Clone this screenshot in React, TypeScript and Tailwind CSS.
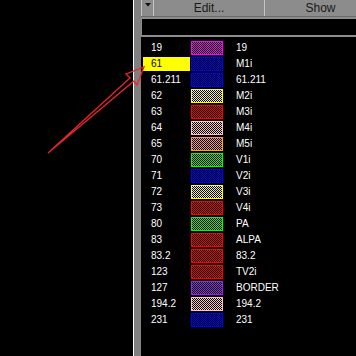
import React from 'react';

type Row = { value: string; color: string; label: string; selected?: boolean };

// full class strings per swatch colour: 1px border + 1px checker of colour/black
const SWATCH: Record<string, string> = {
  magenta: 'border-[#ff00ff] bg-[image:repeating-conic-gradient(#ff00ff_0_25%,#000_0_50%)]',
  blue: 'border-[#0000ff] bg-[image:repeating-conic-gradient(#0000ff_0_25%,#000_0_50%)]',
  yellow: 'border-[#ffff00] bg-[image:repeating-conic-gradient(#ffff00_0_25%,#000_0_50%)]',
  red: 'border-[#ff0000] bg-[image:repeating-conic-gradient(#ff0000_0_25%,#000_0_50%)]',
  pink: 'border-[#ffc0cb] bg-[image:repeating-conic-gradient(#ffc0cb_0_25%,#000_0_50%)]',
  orange: 'border-[#ffa500] bg-[image:repeating-conic-gradient(#ffa500_0_25%,#000_0_50%)]',
  green: 'border-[#00ff00] bg-[image:repeating-conic-gradient(#00ff00_0_25%,#000_0_50%)]',
  purple: 'border-[#a020f0] bg-[image:repeating-conic-gradient(#a020f0_0_25%,#000_0_50%)]',
};

const ROWS: Row[] = [
  { value: '19', color: 'magenta', label: '19' },
  { value: '61', color: 'blue', label: 'M1i', selected: true },
  { value: '61.211', color: 'blue', label: '61.211' },
  { value: '62', color: 'yellow', label: 'M2i' },
  { value: '63', color: 'red', label: 'M3i' },
  { value: '64', color: 'pink', label: 'M4i' },
  { value: '65', color: 'orange', label: 'M5i' },
  { value: '70', color: 'green', label: 'V1i' },
  { value: '71', color: 'blue', label: 'V2i' },
  { value: '72', color: 'yellow', label: 'V3i' },
  { value: '73', color: 'red', label: 'V4i' },
  { value: '80', color: 'green', label: 'PA' },
  { value: '83', color: 'red', label: 'ALPA' },
  { value: '83.2', color: 'red', label: '83.2' },
  { value: '123', color: 'red', label: 'TV2i' },
  { value: '127', color: 'purple', label: 'BORDER' },
  { value: '194.2', color: 'pink', label: '194.2' },
  { value: '231', color: 'blue', label: '231' },
];

const Arrow: React.FC = () => (
  <svg className="absolute left-0 top-0 pointer-events-none" width="356" height="356" viewBox="0 0 356 356">
    <polygon
      points="48,153 130,78 126,74 144,67 137,85 134,81"
      fill="none"
      stroke="#e8262d"
      strokeWidth="1.3"
      strokeLinejoin="miter"
    />
  </svg>
);

export default function App() {
  return (
    <div className="relative w-[356px] h-[356px] bg-black flex overflow-hidden font-['Liberation_Sans',Arial,sans-serif]">
      {/* empty canvas on the left */}
      <div className="w-[133px] shrink-0" />
      <div className="w-px shrink-0 bg-white" />
      <div className="w-[7px] shrink-0 bg-[#808080]" />

      {/* legend panel */}
      <div className="flex-1 flex flex-col min-w-0 overflow-hidden">
        <div className="h-[16px] flex bg-[#8c8c8c] shrink-0">
          <div className="w-[12px] shrink-0 border-l border-[#c4c4c4] flex justify-center pt-[3px]">
            <svg width="6" height="4" viewBox="0 0 6 4">
              <polygon points="0,0 6,0 3,3.5" fill="#111" />
            </svg>
          </div>
          <div className="w-[111px] shrink-0 border-l border-[#c4c4c4] flex items-center justify-center text-[12px] text-[#1a1a1a] leading-none">
            Edit...
          </div>
          <div className="w-[112px] shrink-0 border-l border-[#c4c4c4] flex items-center justify-center text-[12px] text-[#1a1a1a] leading-none">
            Show
          </div>
        </div>
        <div className="h-[3px] shrink-0 bg-[#8c8c8c] border-t border-[#6a6a6a]" />
        <div className="h-[16px] shrink-0 bg-black border-l border-[#8c8c8c]" />
        <div className="h-[2px] shrink-0 bg-[#8c8c8c]" />

        <div className="flex flex-col pt-[3px] pl-[2px]">
          {ROWS.map((r) => (
            <div key={r.value + r.label} className="h-[16px] flex items-center text-[10px] leading-none text-white">
              <div className={`w-[47px] h-[14px] pl-2 flex items-center ${r.selected ? 'bg-[#ffff00] text-black' : ''}`}>
                {r.value}
              </div>
              <div className={`ml-px w-[32px] h-[14px] border bg-[length:2px_2px] ${SWATCH[r.color]}`} />
              <div className="ml-[13px]">{r.label}</div>
            </div>
          ))}
        </div>
      </div>

      <Arrow />
    </div>
  );
}
